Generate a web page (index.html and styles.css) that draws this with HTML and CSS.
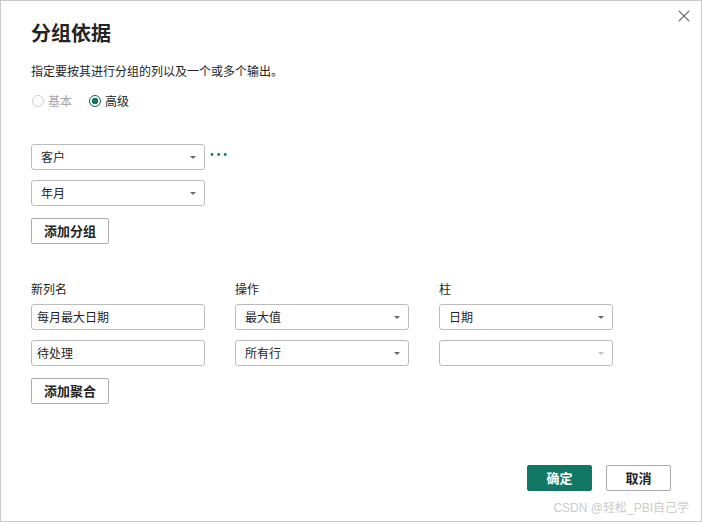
FILE: index.html
```html
<!DOCTYPE html>
<html>
<head>
<meta charset="utf-8">
<link rel="stylesheet" href="styles.css">
</head>
<body>
	<div id="dialogo">
		<button class="fechar" title="关闭">
			<svg width="12" height="12" viewBox="0 0 12 12"><path d="M1 1L11 11M11 1L1 11" stroke="#707070" stroke-width="1.1" fill="none"/></svg>
		</button>

		<h1 class="titulo">分组依据</h1>
		<p class="descricao">指定要按其进行分组的列以及一个或多个输出。</p>

		<div class="modo">
			<label class="radio desativado"><span class="circulo"></span>基本</label>
			<label class="radio"><span class="circulo marcado"></span>高级</label>
		</div>

		<div class="grupos">
			<div class="linha">
				<div class="seletor"><span>客户</span><i class="seta"></i></div>
				<svg class="mais" width="18" height="5" viewBox="0 0 18 5"><circle cx="2" cy="2.5" r="1.4"/><circle cx="8.7" cy="2.5" r="1.4"/><circle cx="15.2" cy="2.5" r="1.4"/></svg>
			</div>
			<div class="linha">
				<div class="seletor"><span>年月</span><i class="seta"></i></div>
			</div>
		</div>
		<button class="botao">添加分组</button>

		<div class="agregacoes">
			<div class="rotulo">新列名</div>
			<div class="rotulo">操作</div>
			<div class="rotulo">柱</div>

			<div class="entrada">每月最大日期</div>
			<div class="seletor"><span>最大值</span><i class="seta"></i></div>
			<div class="seletor"><span>日期</span><i class="seta"></i></div>

			<div class="entrada">待处理</div>
			<div class="seletor"><span>所有行</span><i class="seta"></i></div>
			<div class="seletor vazio"><span></span><i class="seta"></i></div>
		</div>
		<button class="botao">添加聚合</button>

		<div class="rodape">
			<div class="acoes">
				<button class="botao primario">确定</button>
				<button class="botao">取消</button>
			</div>
			<div class="marca">CSDN @轻松_PBI自己学</div>
		</div>
	</div>
</body>
</html>
```

FILE: styles.css
```css
html, body{
	margin: 0;
	padding: 0;
	background: #ffffff;
}

#dialogo{
	position: relative;
	box-sizing: border-box;
	width: 702px;
	height: 522px;
	border: 1px solid #c8c8c8;
	padding: 18px 30px 5px 30px;
	display: flex;
	flex-direction: column;
	align-items: flex-start;
	font-family: "Noto Sans CJK SC", "Noto Sans", sans-serif;
	font-size: 12px;
	color: #252423;
}

.fechar{
	position: absolute;
	top: 8px;
	right: 10px;
	width: 14px;
	height: 14px;
	padding: 0;
	border: none;
	background: none;
	display: flex;
	align-items: center;
	justify-content: center;
}

.titulo{
	margin: 0;
	font-size: 20px;
	line-height: 28px;
	font-weight: bold;
	color: #252423;
}

.descricao{
	margin: 14px 0 0 0;
	line-height: 20px;
	font-size: 12px;
}

.modo{
	margin-top: 10px;
	display: flex;
	gap: 16px;
	height: 20px;
	align-items: center;
}

.radio{
	display: flex;
	align-items: center;
	gap: 4px;
	line-height: 20px;
}

.radio.desativado{
	color: #a6a6a6;
}

.circulo{
	box-sizing: border-box;
	width: 12px;
	height: 12px;
	border-radius: 50%;
	border: 1px solid #d0d0d0;
	margin-left: 1px;
}

.circulo.marcado{
	border: 1px solid #1d5e50;
	background: radial-gradient(circle, #117865 0, #117865 3px, #ffffff 3.5px);
}

.grupos{
	margin-top: 33px;
	display: flex;
	flex-direction: column;
	gap: 10px;
}

.linha{
	display: flex;
	align-items: center;
}

.mais{
	fill: #117865;
	margin-left: 5px;
	margin-top: -5px;
}

.seletor, .entrada{
	box-sizing: border-box;
	width: 174px;
	height: 26px;
	border: 1px solid #bcbcbc;
	border-radius: 3px;
	display: flex;
	align-items: center;
	line-height: 24px;
	background: #ffffff;
}

.seletor{
	padding: 0 8px 0 9px;
	justify-content: space-between;
}

.entrada{
	padding: 0 5px;
}

.seta{
	width: 0;
	height: 0;
	border-left: 3px solid transparent;
	border-right: 3px solid transparent;
	border-top: 3px solid #6b6b6b;
	margin-top: 1px;
}

.vazio .seta{
	border-top-color: #c4c4c4;
}

.botao{
	box-sizing: border-box;
	height: 26px;
	min-width: 65px;
	padding: 0 12px;
	border: 1px solid #acacac;
	border-radius: 2px;
	background: #ffffff;
	font-family: "Noto Sans CJK SC", "Noto Sans", sans-serif;
	font-size: 13px;
	font-weight: bold;
	color: #252423;
	line-height: 24px;
}

.grupos + .botao{
	margin-top: 12px;
}

.agregacoes{
	margin-top: 36px;
	display: grid;
	grid-template-columns: 174px 174px 174px;
	column-gap: 30px;
	row-gap: 10px;
}

.agregacoes .rotulo{
	line-height: 18px;
	margin-bottom: -4px;
}

.agregacoes + .botao{
	margin-top: 12px;
}

.rodape{
	margin-top: auto;
	align-self: stretch;
	display: flex;
	flex-direction: column;
	align-items: flex-end;
}

.acoes{
	display: flex;
	gap: 14px;
}

.botao.primario{
	background: #117865;
	border-color: #117865;
	color: #ffffff;
}

.marca{
	margin-top: 9px;
	margin-right: -18px;
	font-size: 12px;
	line-height: 16px;
	color: #cbcbcb;
	font-family: "Liberation Sans", "Noto Sans CJK SC", sans-serif;
}
```
